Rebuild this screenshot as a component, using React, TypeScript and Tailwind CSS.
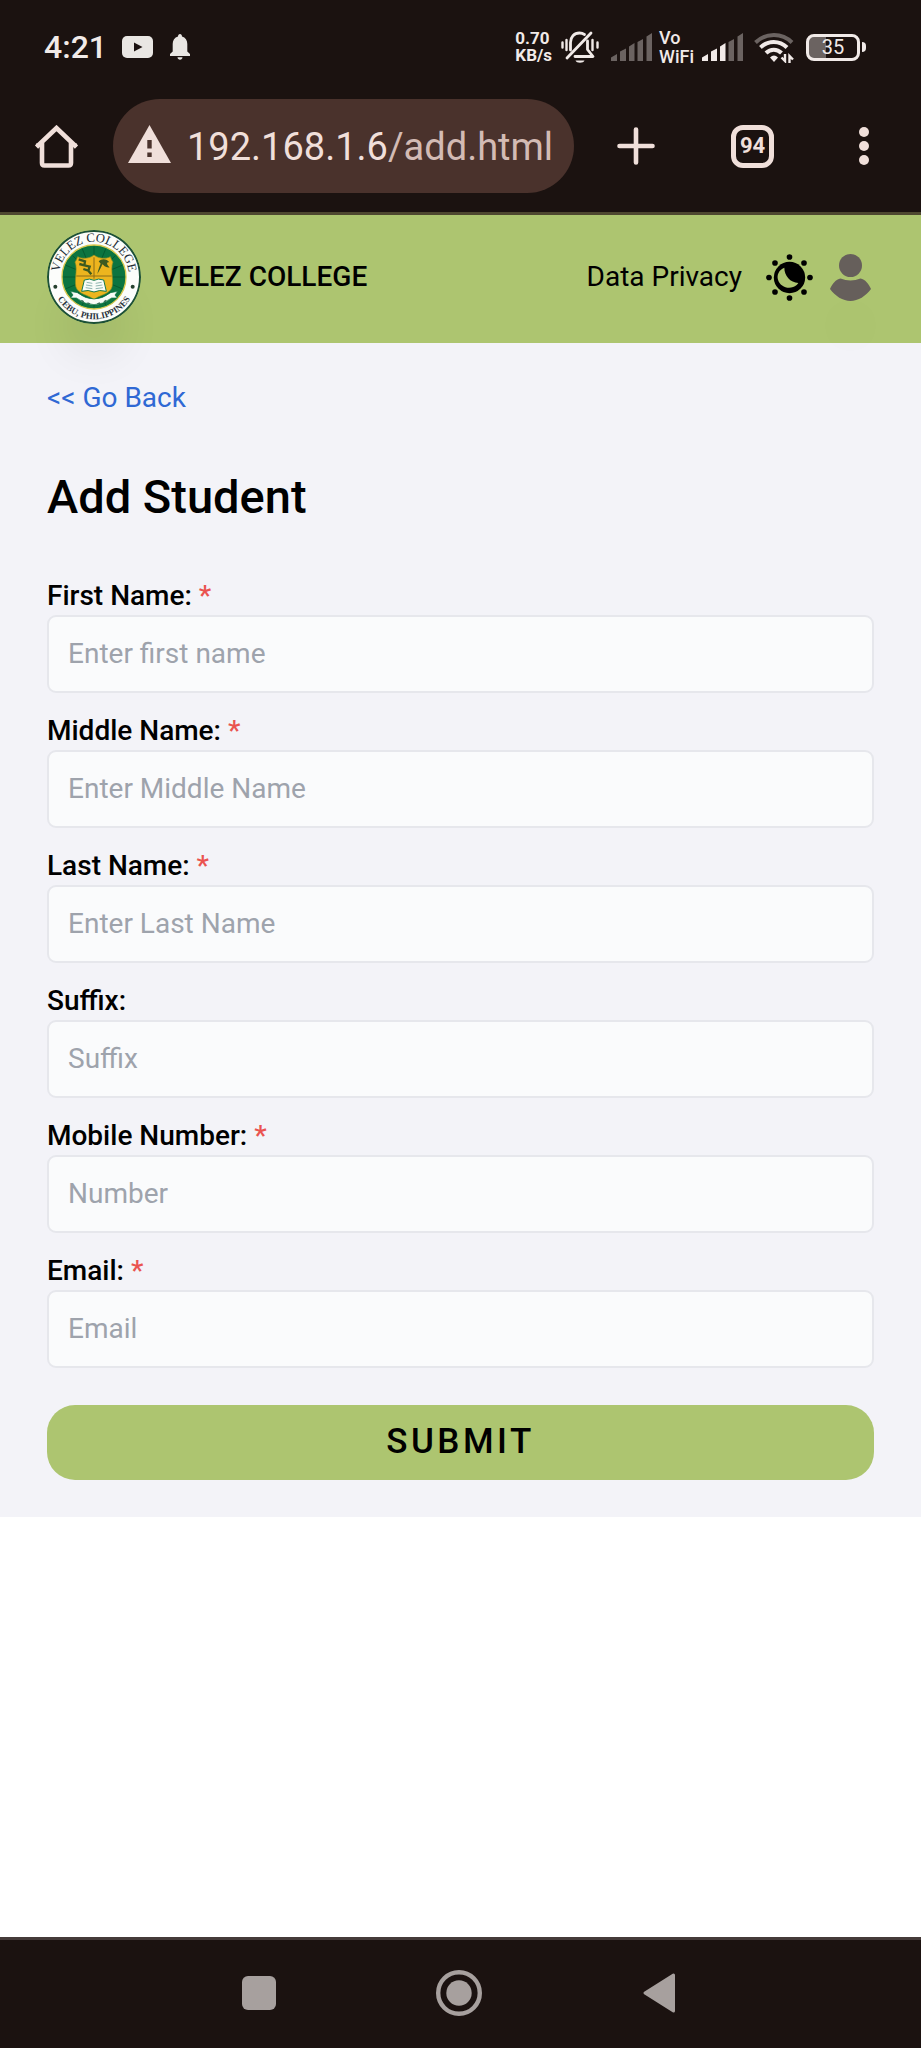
import React from "react";

type Field = {
  id: string;
  label: string;
  placeholder: string;
  type: string;
  required: boolean;
};

const FIELDS: Field[] = [
  { id: "first-name", label: "First Name:", placeholder: "Enter first name", type: "text", required: true },
  { id: "middle-name", label: "Middle Name:", placeholder: "Enter Middle Name", type: "text", required: true },
  { id: "last-name", label: "Last Name:", placeholder: "Enter Last Name", type: "text", required: true },
  { id: "suffix", label: "Suffix:", placeholder: "Suffix", type: "text", required: false },
  { id: "mobile", label: "Mobile Number:", placeholder: "Number", type: "tel", required: true },
  { id: "email", label: "Email:", placeholder: "Email", type: "email", required: true },
];

function SignalBars({ active }: { active: number }) {
  const bars = [
    "M0 28V24.5L6 21V28Z",
    "M9 28V18.5L15 15.5V28Z",
    "M18 28V13.5L23.5 10V28Z",
    "M26.500 28V9L32 6V28Z",
    "M35.500 28V3.500L41 0V28Z",
  ];
  return (
    <svg width="41" height="28" viewBox="0 0 41 28" aria-hidden="true">
      {bars.map((d, i) => (
        <path key={d} d={d} fill={i < active ? "#f1eae8" : "#6b6361"} />
      ))}
    </svg>
  );
}

function VibrateOffIcon() {
  return (
    <svg width="38" height="33" viewBox="0 0 38 33" fill="none" stroke="#f1eae8" strokeWidth="2.8" strokeLinecap="round" aria-hidden="true">
      <path d="M9.500 19V11.500C9.500 6 13 2 18.500 2C20.500 2 22 2.500 23.500 3.500" />
      <path d="M30 2L6 27" />
      <path d="M26.500 10V18.500L32 25.500H14" strokeLinejoin="round" />
      <path d="M14.500 29.500H23.500C22.500 32.500 15.500 32.500 14.500 29.500Z" fill="#f1eae8" stroke="none" />
      <path d="M1.500 11.500V16.500M5.500 9V19M31.500 9V19M36.500 11.500V16.500" strokeWidth="2.4" />
    </svg>
  );
}

function WifiIcon() {
  return (
    <svg width="40" height="31" viewBox="0 0 40 31" fill="none" strokeWidth="4" aria-hidden="true">
      <path d="M1.500 10.500C12 .5 28 .5 38 10.500" stroke="#6b6361" />
      <path d="M6.500 15.500C14 8 25.500 8 33 15.500" stroke="#f1eae8" />
      <path d="M12 21C16.500 16.500 23 16.500 27.500 21" stroke="#f1eae8" />
      <path d="M16 25.500Q20 21.500 24 25.500L20 30Z" fill="#f1eae8" />
      <path d="M31 22V29L27.500 25.500M35.500 31V24L39 27.500" stroke="#f1eae8" strokeWidth="2.4" />
    </svg>
  );
}

function StatusBar() {
  return (
    <div className="flex h-[94px] items-center justify-between pl-[44px] pr-[55px] text-[#f1eae8]">
      <div className="flex items-center">
        <span className="text-[32px] font-medium leading-none">4:21</span>
        <svg className="ml-[15px]" width="31" height="22" viewBox="0 0 31 22" aria-hidden="true">
          <rect width="31" height="22" rx="5" fill="#e9e6e3" />
          <path d="M12 6.500L20.500 11L12 15.500Z" fill="#1b1210" />
        </svg>
        <svg className="ml-[17px]" width="20" height="26" viewBox="0 0 20 26" fill="#e9e6e3" aria-hidden="true">
          <path d="M10 0C11.200 0 12 .9 12 2.500C15.500 3.500 17.300 6.500 17.300 10V17.500L20 20V22H0V20L2.700 17.500V10C2.700 6.500 4.500 3.500 8 2.500C8 .9 8.800 0 10 0Z" />
          <path d="M7.500 23.300H12.500C12.500 26.500 7.500 26.500 7.500 23.300Z" />
        </svg>
      </div>
      <div className="flex items-center">
        <span className="mr-[9px] flex flex-col text-[17px] font-bold leading-[17px]">
          <span>0.70</span>
          <span>KB/s</span>
        </span>
        <VibrateOffIcon />
        <span className="ml-[12px] mr-[7px]">
          <SignalBars active={0} />
        </span>
        <span className="mr-[8px] flex flex-col text-[18px] font-medium leading-[19px]">
          <span>Vo</span>
          <span>WiFi</span>
        </span>
        <SignalBars active={3} />
        <span className="ml-[11px] mr-[12px]">
          <WifiIcon />
        </span>
        <span className="flex h-[27px] w-[54px] items-center justify-center rounded-[8px] border-[3px] border-[#f1eae8] bg-linear-to-r from-[#6b6361] from-35% to-transparent to-35% text-[20px] leading-none">
          35
        </span>
        <span className="ml-[2px] h-[10px] w-[4px] rounded-r-sm bg-[#f1eae8]" />
      </div>
    </div>
  );
}

function BrowserBar() {
  return (
    <div className="flex items-center pb-[19px] pl-[35px] pr-[52px] pt-[5px] text-[#f0dfda]">
      <button type="button" aria-label="Home">
        <svg width="43" height="43" viewBox="0 0 43 43" fill="none" stroke="currentColor" strokeWidth="4.600" aria-hidden="true">
          <path d="M1.500 22L21.500 3L41.500 22" />
          <path d="M7 18V38Q7 40.500 9.500 40.500H33.500Q36 40.500 36 38V18" />
          <path d="M1 20H7M36 20H42" strokeWidth="3" />
        </svg>
      </button>
      <div className="ml-[35px] mr-[43px] flex h-[94px] min-w-0 flex-1 items-center rounded-full bg-[#4a322c] pl-[15px] pr-[22px]">
        <svg className="mb-1 shrink-0" width="43" height="38" viewBox="0 0 43 38" aria-hidden="true">
          <path d="M21.500 0L43 38H0Z" fill="currentColor" />
          <path d="M19.300 15H23.700V23.500H19.300ZM19.300 27.500H23.700V32H19.300Z" fill="#4a322c" />
        </svg>
        <span className="ml-[16px] whitespace-nowrap pt-[2px] text-[38px] leading-none">
          192.168.1.6<span className="text-[#d3bbb4]">/add.html</span>
        </span>
      </div>
      <button type="button" aria-label="New tab">
        <svg width="38" height="38" viewBox="0 0 38 38" stroke="currentColor" strokeWidth="4.600" strokeLinecap="round" aria-hidden="true">
          <path d="M19 2.500V35.500M2.500 19H35.500" />
        </svg>
      </button>
      <button
        type="button"
        aria-label="Open tabs"
        className="ml-[76px] flex size-[43px] items-center justify-center rounded-[12px] border-[5px] border-current text-[22px] font-bold leading-none"
      >
        94
      </button>
      <button type="button" aria-label="Menu" className="ml-[85px]">
        <svg width="10" height="38" viewBox="0 0 10 38" fill="currentColor" aria-hidden="true">
          <circle cx="5" cy="5" r="5" />
          <circle cx="5" cy="19" r="5" />
          <circle cx="5" cy="33" r="5" />
        </svg>
      </button>
    </div>
  );
}

function CollegeSeal() {
  return (
    <svg className="size-[94px] rounded-full shadow-[0_48px_50px_-24px_rgba(0,0,0,0.12)]" viewBox="0 0 282 282" role="img" aria-label="Velez College seal">
      <defs>
        <path id="seal-top" d="M37 155A105 105 0 1 1 245 155" />
        <path id="seal-bottom" d="M14 141A127 127 0 0 0 268 141" />
      </defs>
      <circle cx="141" cy="141" r="138" fill="#fcfdfb" stroke="#1d5138" strokeWidth="6" />
      <circle cx="141" cy="141" r="96" fill="#0c7440" stroke="#d9c84e" strokeWidth="4" />
      <g stroke="#075a30" strokeWidth="3">
        <path d="M141 50V232M50 141H232M77 77L205 205M205 77L77 205M57 106L225 176M225 106L57 176M106 57L176 225M176 57L106 225" />
      </g>
      <path d="M141 75C126 87 105 87 92 80Q88 92 84 96C94 118 78 160 90 178C103 196 128 195 141 210C154 195 179 196 192 178C204 160 188 118 198 96Q194 92 190 80C177 87 156 87 141 75Z" fill="#edb51e" stroke="#8f8f22" strokeWidth="2" />
      <path d="M141 82V146M88 138H194" stroke="#8c6c17" strokeWidth="3" />
      <path d="M95 88L114 94L112 106L128 110L124 122L133 133M97 102L112 106M109 117L124 122" fill="none" stroke="#3c5a20" strokeWidth="7" />
      <path d="M155 94C164 84 180 86 187 97C179 96 177 102 188 112C177 115 170 106 166 103C163 112 158 121 151 132C154 118 158 107 161 101Z" fill="#3c5a20" />
      <path d="M112 150Q128 144 141 151Q154 144 170 150L178 184Q157 178 141 186Q124 178 104 184Z" fill="#f8fcf7" stroke="#16794b" strokeWidth="3" />
      <path d="M119 157L136 160M146 160L164 157M117 165L136 168M146 168L166 165M116 173L136 176M146 176L168 173" stroke="#7aa6a1" strokeWidth="2.500" />
      <path d="M70 184L91 188Q141 226 191 188L212 184L204 195L211 204L194 204Q141 244 88 204L71 204L78 195Z" fill="#f8fcf7" stroke="#0c7440" strokeWidth="2" />
      <path d="M103 211L110 216M121 219L129 222M151 222L159 219M171 216L178 211" stroke="#3b745b" strokeWidth="5" />
      <circle cx="25" cy="170" r="6" fill="#26412f" />
      <circle cx="257" cy="170" r="6" fill="#26412f" />
      <text fontFamily="Liberation Serif, serif" fontSize="38" fill="#222b35">
        <textPath href="#seal-top" startOffset="50%" textAnchor="middle">
          VELEZ COLLEGE
        </textPath>
      </text>
      <text fontFamily="Liberation Serif, serif" fontSize="27" fontWeight="bold" fill="#2b3440">
        <textPath href="#seal-bottom" startOffset="50%" textAnchor="middle">
          CEBU, PHILIPPINES
        </textPath>
      </text>
    </svg>
  );
}

function ThemeIcon() {
  return (
    <svg width="47" height="47" viewBox="0 0 141 141" aria-hidden="true">
      <circle cx="70.500" cy="70.500" r="47" />
      <path d="M55 41C38 48 32 63 36 77C42 99 72 110 92 93Q95 90 97 87C73 85 55 66 55 41Z" fill="#adc570" />
      <circle cx="70.500" cy="9" r="8.500" />
      <circle cx="70.500" cy="132" r="8.500" />
      <circle cx="9" cy="70.500" r="8.500" />
      <circle cx="132" cy="70.500" r="8.500" />
      <circle cx="27" cy="27" r="8.500" />
      <circle cx="114" cy="27" r="8.500" />
      <circle cx="27" cy="114" r="8.500" />
      <circle cx="114" cy="114" r="8.500" />
    </svg>
  );
}

function SiteHeader() {
  return (
    <header className="relative z-10 flex h-[128px] items-center bg-[#adc570] px-[47px] pb-[4px]">
      <a href="#home" className="flex items-center gap-[19px] text-[28px] font-medium">
        <CollegeSeal />
        VELEZ COLLEGE
      </a>
      <nav className="ml-auto flex items-center">
        <a href="#privacy" className="mr-[24px] text-[28px]">
          Data Privacy
        </a>
        <button type="button" aria-label="Toggle theme">
          <ThemeIcon />
        </button>
        <button type="button" aria-label="Account" className="ml-[14px] rounded-full shadow-[0_48px_50px_-12px_rgba(0,0,0,0.06)]">
          <svg width="47" height="47" viewBox="0 0 47 47" fill="#665f5b" aria-hidden="true">
            <circle cx="23.500" cy="11.500" r="11.500" />
            <path d="M13.500 24.500Q23.500 28.500 33.500 24.500C38 25 42 30.500 44 35C39 42 31 47 23.500 47C16 47 8 42 3 35C5 30.500 9 25 13.500 24.500Z" />
          </svg>
        </button>
      </nav>
    </header>
  );
}

function TextField({ field }: { field: Field }) {
  return (
    <div>
      <label htmlFor={field.id} className="block text-[28px] font-medium leading-[38px]">
        {field.label} {field.required && <span className="text-[#ea5350]">*</span>}
      </label>
      <input
        id={field.id}
        type={field.type}
        placeholder={field.placeholder}
        required={field.required}
        className="block h-[78px] w-full rounded-[9px] border-2 border-[#e6e7ec] bg-[#fafbfc] px-[19px] pb-[2px] text-[28px] placeholder:text-[#9ea3ac]"
      />
    </div>
  );
}

function NavigationBar() {
  return (
    <nav className="flex h-[111px] items-center justify-center gap-[157px] border-t-[3px] border-[#453b39] bg-[#1b1210] pb-[2px] pr-[3px]">
      <button type="button" aria-label="Recent apps" className="flex w-[40px] justify-center">
        <span className="size-[34px] rounded-[6px] bg-[#a7a09e]" />
      </button>
      <button type="button" aria-label="Home screen">
        <svg width="46" height="46" viewBox="0 0 46 46" aria-hidden="true">
          <circle cx="23" cy="23" r="20.800" fill="none" stroke="#a7a09e" strokeWidth="4.400" />
          <circle cx="23" cy="23" r="12.700" fill="#a7a09e" />
        </svg>
      </button>
      <button type="button" aria-label="Back" className="flex w-[40px] justify-center">
        <svg width="32" height="40" viewBox="0 0 32 40" aria-hidden="true">
          <path d="M2 20L30.500 2V38Z" fill="#a7a09e" stroke="#a7a09e" strokeWidth="3" strokeLinejoin="round" />
        </svg>
      </button>
    </nav>
  );
}

export default function App() {
  return (
    <div className="flex min-h-screen flex-col bg-white font-[Roboto,sans-serif] text-black">
      <div className="border-b-[3px] border-[#4e4830] bg-[#1b1210]">
        <StatusBar />
        <BrowserBar />
      </div>
      <SiteHeader />
      <main className="bg-[#f3f3f8] px-[47px] pb-[37px] pt-[36px]">
        <a href="#back" className="block w-fit text-[28px] leading-[38px] text-[#2f68d4]">
          &lt;&lt; Go Back
        </a>
        <h1 className="my-[52px] text-[47px] font-medium leading-[56px]">Add Student</h1>
        <form className="flex flex-col gap-[19px]" onSubmit={(e) => e.preventDefault()}>
          {FIELDS.map((field) => (
            <TextField key={field.id} field={field} />
          ))}
          <button
            type="submit"
            className="mt-[18px] h-[75px] w-full rounded-[28px] bg-[#adc570] text-[35px] font-medium tracking-widest"
          >
            SUBMIT
          </button>
        </form>
      </main>
      <div className="flex-1" />
      <NavigationBar />
    </div>
  );
}
